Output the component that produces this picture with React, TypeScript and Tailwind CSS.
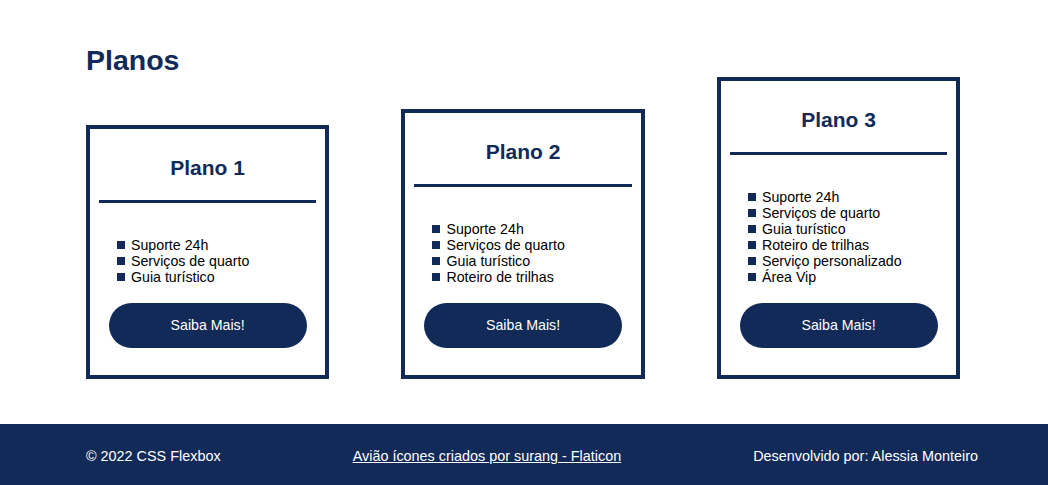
import React from "react";

const NAVY = "bg-[#122a58]";

type Plan = { name: string; items: string[] };

const plans: Plan[] = [
  { name: "Plano 1", items: ["Suporte 24h", "Serviços de quarto", "Guia turístico"] },
  {
    name: "Plano 2",
    items: ["Suporte 24h", "Serviços de quarto", "Guia turístico", "Roteiro de trilhas"],
  },
  {
    name: "Plano 3",
    items: [
      "Suporte 24h",
      "Serviços de quarto",
      "Guia turístico",
      "Roteiro de trilhas",
      "Serviço personalizado",
      "Área Vip",
    ],
  },
];

function Card({ plan }: { plan: Plan }) {
  return (
    <div className="w-[243.2px] border-4 border-[#122a58] flex flex-col px-[9px] pt-[27px] pb-[27px] bg-white">
      <h2 className="text-[21px] leading-[24px] font-bold text-center text-[#122a58]">{plan.name}</h2>
      <div className={`mt-[20px] h-[3px] ${NAVY}`} />
      <ul className="mt-[34px] pl-[18px] flex flex-col">
        {plan.items.map((it) => (
          <li key={it} className="flex items-center gap-[6px] text-[14.2px] leading-[16px] text-black">
            <span className={`w-[8px] h-[8px] ${NAVY} shrink-0`} />
            <span>{it}</span>
          </li>
        ))}
      </ul>
      <button
        className={`mt-[18px] h-[45px] w-[198px] self-center rounded-full ${NAVY} text-white text-[14.2px] leading-[16px] pb-[1px]`}
      >
        Saiba Mais!
      </button>
    </div>
  );
}

export default function App() {
  return (
    <div className="bg-white min-h-[485px]" style={{ fontFamily: '"Liberation Sans", Arial, sans-serif' }}>
      <div className="pl-[86px] pt-[44px]">
        <h1 className="text-[28.5px] leading-[32px] font-bold text-[#122a58]">Planos</h1>
        <div className="mt-[1px] flex items-end gap-[72.3px]">
          {plans.map((p) => (
            <Card key={p.name} plan={p} />
          ))}
        </div>
      </div>
      <footer
        className={`mt-[45px] h-[64px] ${NAVY} flex items-center justify-between pl-[86px] pr-[70px] text-white text-[14.4px] leading-[16px]`}
      >
        <span>© 2022 CSS Flexbox</span>
        <a href="#" className="underline text-white">
          Avião ícones criados por surang - Flaticon
        </a>
        <span>Desenvolvido por: Alessia Monteiro</span>
      </footer>
    </div>
  );
}
